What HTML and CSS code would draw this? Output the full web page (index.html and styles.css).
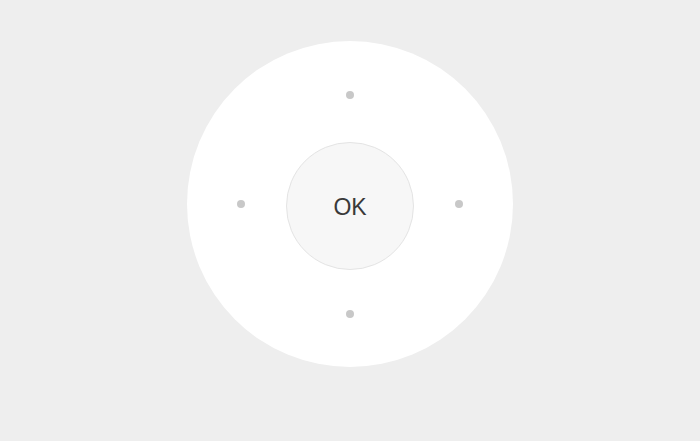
FILE: index.html
```html
<!DOCTYPE html>
<html>
<head>
<meta charset="utf-8">
<link rel="stylesheet" href="styles.css">
</head>
<body>
<div class="stage">
  <div class="pad">
    <span class="dot"></span>
    <div class="row">
      <span class="dot side"></span>
      <button class="ok">OK</button>
      <span class="dot side"></span>
    </div>
    <span class="dot"></span>
  </div>
</div>
</body>
</html>
```

FILE: styles.css
```css
html, body {
  margin: 0;
  padding: 0;
  background: #eeeeee;
  width: 700px;
  height: 441px;
  overflow: hidden;
}
.stage {
  display: flex;
  justify-content: center;
  padding-top: 41px;
}
.pad {
  width: 326px;
  height: 326px;
  box-sizing: border-box;
  padding-top: 50px;
  border-radius: 50%;
  background: #ffffff;
  display: flex;
  flex-direction: column;
  align-items: center;
  justify-content: flex-start;
  gap: 40px;
}
.row {
  display: flex;
  align-items: center;
  gap: 41px;
  margin-top: 3px;
}
.dot {
  display: block;
  width: 8px;
  height: 8px;
  border-radius: 50%;
  background: #c8c8c8;
}
.dot.side {
  margin-bottom: 4px;
}
.ok {
  width: 128px;
  height: 128px;
  border-radius: 50%;
  background: #f7f7f7;
  border: 1px solid #e4e4e4;
  box-sizing: border-box;
  font-family: "Liberation Sans", Arial, sans-serif;
  font-weight: 400;
  font-size: 23px;
  color: #3a3a3a;
  padding: 2px 0 0 0;
  margin: 0;
  display: flex;
  align-items: center;
  justify-content: center;
}
```
